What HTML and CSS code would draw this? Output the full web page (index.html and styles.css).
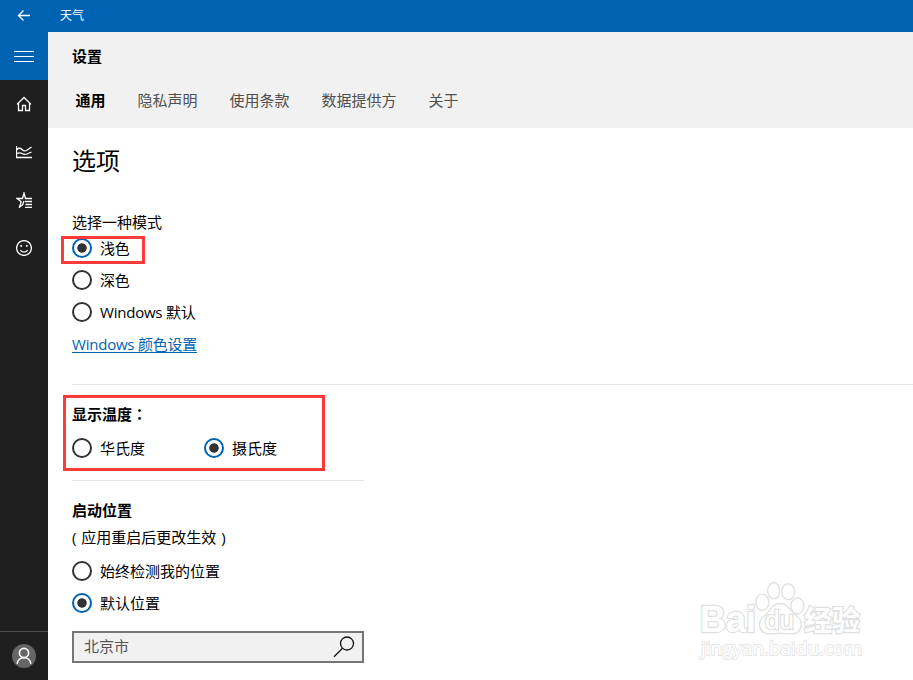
FILE: index.html
```html
<!DOCTYPE html>
<html lang="zh-CN">
<head>
    <meta charset="UTF-8">
    <meta name="viewport" content="width=device-width, initial-scale=1.0">
    <title>天气</title>
    <link rel="stylesheet" href="styles.css">
</head>
<body>

    <!-- 标题栏 -->
    <header class="titlebar">
        <button class="back" aria-label="返回">
            <svg width="14" height="12" viewBox="0 0 14 12"><path d="M13 5.500H1.500M6.500 .5L1.500 5.500l5 5"/></svg>
        </button>
        <span>天气</span>
    </header>

    <div class="app">
        <!-- 侧边导航 -->
        <nav class="sidebar">
            <a class="nav-item menu">
                <svg width="20" height="12" viewBox="0 0 20 12"><path d="M0 .5h20M0 5.500h20M0 10.500h20"/></svg>
            </a>
            <a class="nav-item">
                <svg width="16" height="16" viewBox="0 0 16 16"><path d="M1 8.400L8 1.500l7 6.900M2.500 7v7.500h4v-5h3v5h4V7"/></svg>
            </a>
            <a class="nav-item">
                <svg width="16" height="16" viewBox="0 0 16 16"><path d="M.5 2v11.500H16M1 5.500c2-2 3.500-1.500 5 0s2.500 2 4.500 1L15.500 3M1 9.500c2-1 3.500-1 5 0s3 1.300 5 .5l4.500-2"/></svg>
            </a>
            <a class="nav-item">
                <svg width="16" height="16" viewBox="0 0 16 16"><path d="M9.500 6.500L8 1 6.500 6.500H1l4.200 3.200L3.500 15.200l4-3.200M6.500 13L8 9M9 6.500h7M9 9.500h7M9.500 12.500H16M9 15.500h7"/></svg>
            </a>
            <a class="nav-item">
                <svg width="16" height="16" viewBox="0 0 16 16"><circle cx="8" cy="8" r="7.400"/><path d="M4.300 10c1.500 2.700 5.900 2.700 7.400 0"/><path class="eyes" d="M4.300 5h1.700v1.700H4.300zM10 5h1.700v1.700H10z"/></svg>
            </a>
            <a class="nav-item account">
                <svg width="24" height="24" viewBox="0 0 24 24"><circle class="disc" cx="12" cy="12" r="12"/><circle cx="12" cy="9" r="4.600"/><path d="M5.200 20c.4-8.400 13.200-8.400 13.600 0"/></svg>
            </a>
        </nav>

        <main class="content">
            <div class="page-head">
                <h2>设置</h2>
                <div class="tabs">
                    <a class="tab active">通用</a>
                    <a class="tab">隐私声明</a>
                    <a class="tab">使用条款</a>
                    <a class="tab">数据提供方</a>
                    <a class="tab">关于</a>
                </div>
            </div>

            <!-- 选项 -->
            <section class="group modes">
                <h1>选项</h1>
                <p>选择一种模式</p>
                <div class="radios">
                    <label class="radio checked mark mark-mode"><i></i>浅色</label>
                    <label class="radio"><i></i>深色</label>
                    <label class="radio"><i></i>Windows 默认</label>
                </div>
                <a class="link">Windows 颜色设置</a>
            </section>

            <section class="group units">
                <div class="mark mark-units">
                    <h3>显示温度<span class="colon" lang="zh-TW">：</span></h3>
                    <div class="radios row">
                        <label class="radio"><i></i>华氏度</label>
                        <label class="radio checked"><i></i>摄氏度</label>
                    </div>
                </div>
            </section>

            <section class="group location">
                <h3>启动位置</h3>
                <p>( 应用重启后更改生效 )</p>
                <div class="radios">
                    <label class="radio"><i></i>始终检测我的位置</label>
                    <label class="radio checked"><i></i>默认位置</label>
                </div>
                <div class="search">
                    <span>北京市</span>
                    <svg width="22" height="22" viewBox="0 0 22 22"><circle cx="14" cy="7.500" r="6.500"/><path d="M9.500 12.200L1 20.700"/></svg>
                </div>
            </section>
        </main>
    </div>

    <!-- 水印 -->
    <svg class="watermark" width="172" height="90" viewBox="0 0 172 90">
        <g class="paw">
            <ellipse cx="66.300" cy="26.300" rx="6.500" ry="8.200"/>
            <ellipse cx="77.700" cy="14.700" rx="6" ry="8.200"/>
            <ellipse cx="92.300" cy="15.700" rx="6.500" ry="8"/>
            <ellipse cx="101.300" cy="30" rx="6.500" ry="8"/>
            <path d="M84 27.500c-8 0-10 8-15 12-9 6-6 18.500 5 18.500 4 0 6-.8 10-.8s7 .8 11 .8c11 0 14-12.500 5-18.500-5-4-8-12-16-12z"/>
        </g>
        <text class="logo" x="4" y="56" textLength="56" lengthAdjust="spacingAndGlyphs">Bai</text>
        <text class="du" x="69" y="53" textLength="29" lengthAdjust="spacingAndGlyphs">du</text>
        <text class="cn" x="108" y="55">经验</text>
        <text class="site" x="5" y="79" textLength="161" lengthAdjust="spacingAndGlyphs">jingyan.baidu.com</text>
    </svg>

</body>
</html>
```
FILE: styles.css
```css
/* 基础 */
*, *::after {
    box-sizing: border-box;
}
body {
    margin: 0;
    height: 100vh;
    overflow: hidden;
    display: flex;
    flex-direction: column;
    font-family: "Open Sans", "Noto Sans CJK SC", sans-serif;
    font-size: 15px;
    line-height: 20px;
    color: #000;
    background: #fff;
}
h1, h2, h3, p {
    margin: 0;
    font-size: 15px;
    font-weight: 400;
}
h2, h3 {
    font-weight: 700;
}
svg {
    display: block;
    fill: none;
    stroke: #fff;
}

/* 标题栏 */
.titlebar {
    flex: none;
    display: flex;
    align-items: center;
    gap: 12px;
    height: 32px;
    background: #0063b1;
    color: #fff;
    font-size: 12px;
}
.back {
    display: grid;
    place-items: center;
    width: 48px;
    height: 32px;
    padding: 0;
    border: 0;
    background: none;
}
.back svg {
    stroke-width: 1.3;
}

/* 侧边导航 */
.app {
    flex: 1;
    display: flex;
    min-height: 0;
}
.sidebar {
    flex: none;
    display: flex;
    flex-direction: column;
    width: 48px;
    background: #1f1f1f;
}
.nav-item {
    display: grid;
    place-items: center;
    height: 48px;
}
.nav-item svg {
    stroke-width: 1.3;
}
.nav-item .eyes {
    fill: #fff;
    stroke: none;
}
.menu {
    background: #0063b1;
}
.menu svg {
    margin-top: 2px;
    stroke-width: 1;
}
.account {
    height: 49px;
    margin-top: auto;
    border-top: 1px solid #4c4c4c;
}
.account svg {
    stroke-width: 1.6;
}
.account .disc {
    fill: #666;
    stroke: none;
}

/* 页头 */
.content {
    flex: 1;
}
.page-head {
    height: 96px;
    padding: 14px 24px 0;
    background: #f1f1f1;
}
.tabs {
    display: flex;
    gap: 32px;
    padding: 24px 3.4px 0;
    color: #4f4f4f;
}
.tab.active {
    color: #000;
    font-weight: 700;
}

/* 设置分组 */
.group {
    margin-left: 24px;
}
.modes {
    height: 257px;
    padding-top: 17px;
    border-bottom: 1px solid #e4e4e4;
}
.modes h1 {
    margin-bottom: 35px;
    font-size: 24px;
    line-height: 32px;
}
.radios {
    display: flex;
    flex-direction: column;
    align-items: flex-start;
    gap: 12px;
    padding: 6px 0 12px;
}
.radio {
    display: flex;
    gap: 8px;
}
.radio i {
    width: 20px;
    height: 20px;
    border: 2px solid #333;
    border-radius: 50%;
}
.radio.checked i {
    border-color: #0063b1;
    background: radial-gradient(circle, #333 4.3px, transparent 5.1px);
}
.link {
    color: #0063b1;
    text-decoration: underline;
    text-underline-offset: 2px;
    text-decoration-thickness: 1px;
}
.modes .radio, .link {
    letter-spacing: -0.22px;
}

.units {
    width: 292px;
    height: 96px;
    padding-top: 19px;
    border-bottom: 1px solid #e4e4e4;
}
.units .radios {
    padding: 14px 0 0;
}
.radios.row {
    display: grid;
    grid-template-columns: 132px auto;
    gap: 0;
}
.colon {
    font-family: "Noto Sans CJK TC", sans-serif;
}

.location {
    width: 292px;
    padding-top: 19px;
}
.location p {
    margin-top: 7px;
    word-spacing: 1px;
}
.location .radios {
    padding: 14px 0 18px;
}
.search {
    display: flex;
    align-items: center;
    justify-content: space-between;
    height: 32px;
    padding: 0 7px 0 10px;
    border: 2px solid #767676;
    background: #f1f1f1;
    color: #555;
}
.search span {
    margin-bottom: 2px;
}
.search svg {
    stroke: #111;
    stroke-width: 1.3;
}

/* 红色标注框 */
.mark {
    position: relative;
}
.mark::after {
    content: "";
    position: absolute;
    border: 3px solid #ff3a3a;
}
.mark-mode::after {
    top: -2px;
    left: -11px;
    width: 84px;
    height: 28px;
}
.mark-units::after {
    top: -9px;
    left: -9px;
    width: 262px;
    height: 76px;
}

/* 水印 */
.watermark {
    position: absolute;
    left: 696px;
    top: 576px;
    fill: #fff;
    stroke: #e0e0e0;
    stroke-width: 1.4;
}
.watermark text {
    font-family: "Liberation Sans", "Noto Sans CJK SC", sans-serif;
    paint-order: stroke;
    stroke-width: 2.4px;
}
.watermark .logo {
    font-size: 36px;
    font-weight: 700;
}
.watermark .du {
    font-size: 25px;
}
.watermark .cn {
    font-size: 28px;
    font-weight: 700;
}
.watermark .site {
    font-family: "Open Sans", sans-serif;
    font-size: 19px;
    stroke: #e6e6e6;
    stroke-width: 1.8px;
}
```
